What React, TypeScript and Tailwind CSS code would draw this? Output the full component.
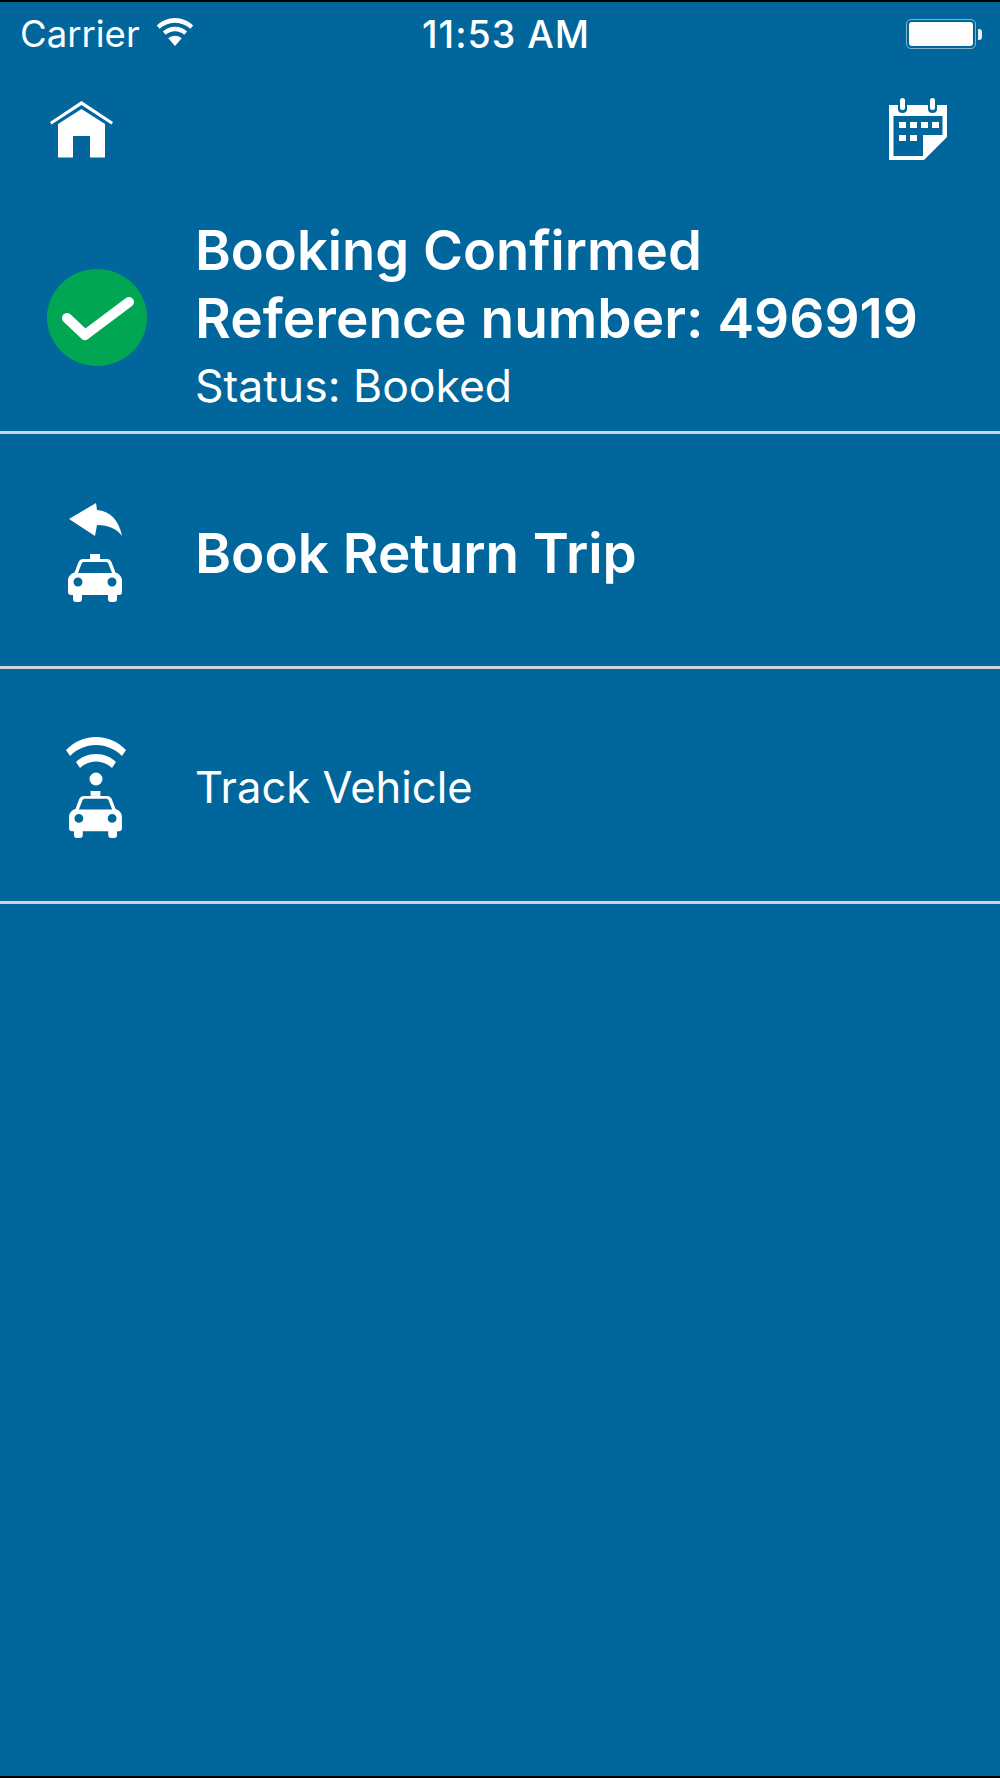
const Taxi = ({ className }: { className?: string }) => (
  <svg className={className} viewBox="0 0 54 48" fill="#fff" aria-hidden="true">
    <path d="M22 0h10v5H22z" />
    <path fillRule="evenodd" d="M15 5h24c2 0 3.500 1 4.500 3l4 10.500c3.500 1 6.500 4 6.500 8V38c0 2-1 3-3 3H3c-2 0-3-1-3-3V26.500c0-4 3-7 6.500-8l4-10.500c1-2 2.500-3 4.500-3zm1.500 3c-1.500 0-2.500 .5-3 2L10 19h34l-3.500-9c-.5-1.500-1.500-2-3-2zM10 23.500a4.500 4.500 0 1 0 0 9 4.500 4.500 0 0 0 0-9zm34 0a4.500 4.500 0 1 0 0 9 4.500 4.500 0 0 0 0-9z" />
    <path d="M5 40h9v5c0 2-1 3-3 3H8c-2 0-3-1-3-3zM40 40h9v5c0 2-1 3-3 3h-3c-2 0-3-1-3-3z" />
  </svg>
);

export default function App() {
  return (
    <div
      className="flex h-[1778px] w-[1000px] flex-col overflow-hidden border-t-2 border-b-2 border-black bg-[#00669b] text-white"
      style={{ fontFamily: '"Inter", "Liberation Sans", sans-serif' }}
    >
      <div className="grid h-[62px] shrink-0 grid-cols-[1fr_auto_1fr] items-center pl-[20px] pr-[18px] pt-[2px]">
        <div className="flex items-center">
          <span className="text-[36.500px] leading-none">Carrier</span>
          <svg className="ml-[16px] mt-[-4px] h-[28px] w-[38px]" viewBox="0 0 39 30" fill="#fff" aria-hidden="true">
            <path d="M19.500 0C12 0 5.500 3 0 8l3 3.500C7.500 7.500 13 5 19.500 5S31.500 7.500 36 11.500L39 8C33.500 3 27 0 19.500 0z" />
            <path d="M19.500 9.500c-5 0-9.500 2-13 5l3 3.500c2.800-2.500 6.200-3.800 10-3.800s7.200 1.300 10 3.800l3-3.500c-3.500-3-8-5-13-5z" />
            <path d="M19.500 19c-2.800 0-5.300 1-7.200 2.700l7.200 8.300 7.200-8.300C24.800 20 22.300 19 19.500 19z" />
          </svg>
        </div>
        <span className="ml-[10px] mt-[2px] text-[37.500px] font-medium leading-none tracking-[1px]">11:53 AM</span>
        <div className="flex items-center justify-end">
          <div className="h-[30px] w-[70px] rounded-[5px] border border-white/50 p-[2px]">
            <div className="h-full w-full rounded-[3px] bg-white" />
          </div>
          <div className="ml-[2px] h-[11px] w-[4px] rounded-r-[3px] bg-white/90" />
        </div>
      </div>

      <div className="flex h-[114px] shrink-0 items-start justify-between pl-[50px] pr-[53px] pt-[34px]">
        <svg className="mt-[3px] h-[57px] w-[63px]" viewBox="0 0 63 57" fill="#fff" aria-hidden="true">
          <path d="M31.500 0 63 21l-1.500 2.500L31.500 4 1.500 23.500 0 21z" />
          <path d="M31.500 8 55 23v33.500H40V35H23v21.500H8V23z" />
        </svg>
        <svg className="h-[62px] w-[58px]" viewBox="0 0 58 62" fill="#fff" aria-hidden="true">
          <path fillRule="evenodd" d="M0 7h9v4c0 2.500 1.500 4 4.500 4s4.500-1.500 4.500-4V7h21v4c0 2.500 1.500 4 4.500 4S48 13.500 48 11V7h10v32L35 62H0zM4.500 18v40H34V37h19.500V18z" />
          <rect x="11" y="0" width="5" height="12" rx="2.500" />
          <rect x="41" y="0" width="5" height="12" rx="2.500" />
          <path d="M10 24h7v6h-7zM21 24h7v6h-7zM32 24h7v6h-7zM43 24h7v6h-7zM10 37h7v6h-7zM21 37h7v6h-7z" />
        </svg>
      </div>

      <div className="flex h-[256px] shrink-0 items-center border-b-[3px] border-[#cbd6dc] pl-[47px]">
        <svg className="mt-[26px] h-[97px] w-[100px] shrink-0" viewBox="0 0 100 97" aria-hidden="true">
          <ellipse cx="50" cy="48.500" rx="50" ry="48.500" fill="#00a651" />
          <path d="M20 49 38 66 82 33" fill="none" stroke="#fff" strokeWidth="10" strokeLinecap="round" strokeLinejoin="round" />
        </svg>
        <div className="ml-[48px] mt-[27px] flex flex-col">
          <span className="text-[54.300px] font-semibold leading-[68px]">Booking Confirmed</span>
          <span className="text-[55px] font-semibold leading-[68px]">Reference number: 496919</span>
          <span className="text-[44.500px] leading-[68px]">Status: Booked</span>
        </div>
      </div>

      <div className="flex h-[235px] shrink-0 items-center border-b-[3px] border-[#cbd6dc]">
        <div className="mt-[4px] flex w-[190px] flex-col items-center">
          <svg className="h-[33px] w-[53px]" viewBox="0 0 53 33" fill="#fff" aria-hidden="true">
            <path d="M0 16 27 0l1 7c14 1 22 11 25 26-5-7-13-11-25-11l-2 11z" />
          </svg>
          <Taxi className="mt-[18px] h-[48px] w-[54px]" />
        </div>
        <span className="ml-[5px] mt-[7px] text-[54.800px] font-semibold leading-none">Book Return Trip</span>
      </div>

      <div className="flex h-[235px] shrink-0 items-center border-b-[3px] border-[#cbd6dc]">
        <div className="mt-[4px] flex w-[191px] flex-col items-center">
          <svg className="h-[50px] w-[60px]" viewBox="0 0 60 50" fill="#fff" aria-hidden="true">
            <path d="M30 0C18 0 8 5 0 13l4 6c7-7 16-11 26-11s19 4 26 11l4-6C52 5 42 0 30 0z" />
            <path d="M30 17c-8 0-15 3-20 8l4 6c4-4 10-6.500 16-6.500S42 27 46 31l4-6c-5-5-12-8-20-8z" />
            <circle cx="30" cy="42" r="6.500" />
          </svg>
          <Taxi className="mt-[4px] h-[47px] w-[53px]" />
        </div>
        <span className="ml-[4px] mt-[6px] text-[43.500px] leading-none">Track Vehicle</span>
      </div>
    </div>
  );
}
